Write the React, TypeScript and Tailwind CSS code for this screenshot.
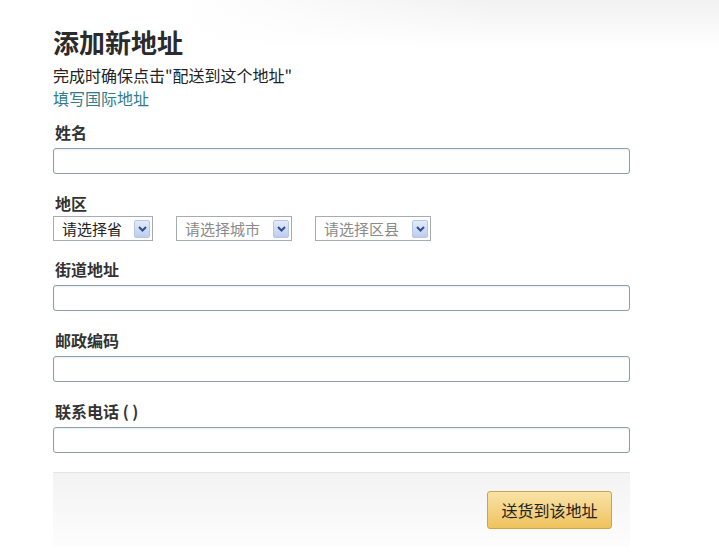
import React from "react";

const font = { fontFamily: '"Noto Sans CJK SC", "Noto Sans", sans-serif' };

function Arrow() {
  return (
    <span className="ml-auto mr-[2px] flex h-[18px] w-[16px] items-center justify-center rounded-[2px] border border-[#b5c6e6] bg-gradient-to-b from-[#e3ebf9] to-[#bccdee]">
      <svg width="9" height="6" viewBox="0 0 9 6">
        <path d="M1 1 L4.5 4.5 L8 1" fill="none" stroke="#2e4f8f" strokeWidth="2" />
      </svg>
    </span>
  );
}

function Select({ text, w, dark }: { text: string; w: string; dark?: boolean }) {
  return (
    <div className={`flex h-[25px] items-center border border-[#a5acb2] bg-white pl-[8px] ${w}`}>
      <span className={`text-[15px] leading-none ${dark ? "text-[#222]" : "text-[#8a8a8a]"}`}>{text}</span>
      <Arrow />
    </div>
  );
}

function Field({ label }: { label: string }) {
  return (
    <div className="flex flex-col">
      <div className="h-[22px] pl-[2px] text-[16px] font-semibold leading-[22px] text-[#333]">{label}</div>
      <div className="mt-[5px] h-[26px] w-full rounded-[3px] border border-[#8a9eab] bg-white shadow-[inset_0_1px_2px_rgba(120,150,180,0.15)]" />
    </div>
  );
}

export default function App() {
  return (
    <div
      style={font}
      className="h-[557px] w-[719px] overflow-hidden bg-[linear-gradient(to_right,rgba(255,255,255,1)_25%,rgba(255,255,255,0)_70%),linear-gradient(to_bottom,#f1f1f1,#ffffff_48px)]"
    >
      <div className="ml-[53px] w-[577px] pt-[24px]">
        <h1 className="h-[36px] text-[26px] font-bold leading-[36px] text-[#2b2b2b]">添加新地址</h1>
        <div className="mt-[5px] text-[16px] leading-[20px] text-[#222]">完成时确保点击"配送到这个地址"</div>
        <div className="mt-[3px] text-[16px] leading-[20px] text-[#2f7d8c]">填写国际地址</div>

        <div className="mt-[13px]">
          <Field label="姓名" />
        </div>

        <div className="mt-[18px] flex flex-col">
          <div className="h-[22px] pl-[2px] text-[16px] font-semibold leading-[22px] text-[#333]">地区</div>
          <div className="mt-[2px] flex gap-[23px]">
            <Select text="请选择省" w="w-[100px]" dark />
            <Select text="请选择城市" w="w-[116px]" />
            <Select text="请选择区县" w="w-[116px]" />
          </div>
        </div>

        <div className="mt-[17px]">
          <Field label="街道地址" />
        </div>
        <div className="mt-[18px]">
          <Field label="邮政编码" />
        </div>
        <div className="mt-[18px]">
          <Field label="联系电话 ( )" />
        </div>

        <div className="mt-[19px] flex h-[75px] justify-end border-t border-[#e4e4e4] bg-gradient-to-b from-[#f3f3f3] to-[#fdfdfd] pr-[18px] pt-[18px]">
          <button className="flex h-[38px] w-[125px] items-center justify-center rounded-[3px] border border-[#c9a44a] bg-gradient-to-b from-[#f9e3a6] to-[#efc25c] text-[16px] text-[#222]">
            送货到该地址
          </button>
        </div>
      </div>
    </div>
  );
}
